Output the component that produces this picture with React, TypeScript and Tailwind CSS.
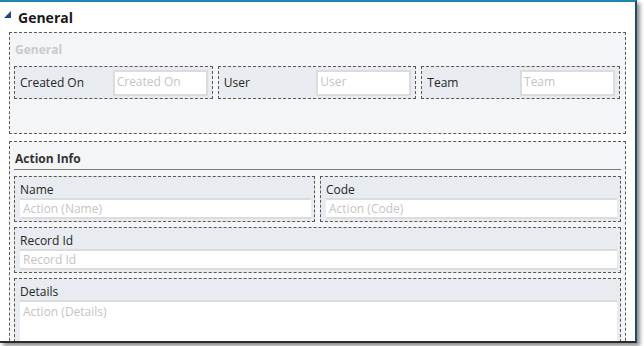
import React from 'react'

const font = { fontFamily: '"Segoe UI", "Open Sans", "Noto Sans", sans-serif' }

function InlineField({ label, placeholder }: { label: string; placeholder: string }) {
  return (
    <div className="flex-1 h-[33px] flex items-center border border-dashed border-[#595959] bg-[#e8ebef]">
      <span className="pl-[5px] text-[12px] text-[#262626] flex-1">{label}</span>
      <div className="w-[95px] h-[26px] mr-[4px] bg-white border-2 border-[#dcdcdc] flex items-center pl-[2px] pb-[2px] text-[12px] text-[#c4c4c4]">
        {placeholder}
      </div>
    </div>
  )
}

function StackedField({
  label,
  placeholder,
  className = '',
  tall = false,
}: {
  label: string
  placeholder: string
  className?: string
  tall?: boolean
}) {
  return (
    <div className={`border border-dashed border-[#595959] bg-[#e8ebef] pt-[5px] pl-[5px] pr-[3px] pb-[2px] ${className}`}>
      <div className="h-[16px] leading-[16px] text-[12px] text-[#262626]">{label}</div>
      <div
        className={`bg-white border-t-2 border-b-2 border-[#dcdcdc] pl-[3px] text-[12px] text-[#c4c4c4] flex ${
          tall ? 'h-[80px] items-start pt-[1px]' : 'h-[21px] items-center'
        }`}
      >
        {placeholder}
      </div>
    </div>
  )
}

export default function App() {
  return (
    <div className="w-[644px] h-[346px] bg-white" style={font}>
      <div className="w-[637px] h-[343px] border-t-2 border-t-[#1f86b3] border-r-2 border-r-[#1c4d69] border-b-2 border-b-[#2b2b2b] bg-white overflow-hidden shadow-[3px_3px_4px_rgba(0,0,0,0.45)]">
        {/* Header */}
        <div className="h-[30px] flex items-center pl-[4px] gap-[7px]">
          <svg width="7" height="7" viewBox="0 0 7 7" className="-mt-[6px]">
            <polygon points="7,0 7,7 0,7" fill="#1d4a86" />
          </svg>
          <span className="text-[14px] font-bold text-[#1a1a1a]">General</span>
        </div>

        {/* General section */}
        <div className="mx-[9px] h-[102px] border border-dashed border-[#595959] bg-[#f4f5f7]">
          <div className="h-[33px] flex items-center pl-[5px] text-[12px] font-bold text-[#c9cacd]">General</div>
          <div className="flex gap-[5px] pl-[4px] pr-[5px]">
            <InlineField label="Created On" placeholder="Created On" />
            <InlineField label="User" placeholder="User" />
            <InlineField label="Team" placeholder="Team" />
          </div>
        </div>

        {/* Action Info section */}
        <div className="mx-[9px] mt-[7px] h-[220px] border border-dashed border-[#595959] bg-[#f4f5f7]">
          <div className="h-[27px] flex items-end pl-[5px] pb-[1px] text-[12px] font-bold text-[#333333]">Action Info</div>
          <div className="mx-[4px] h-[1px] bg-[#7d7d75]" />
          <div className="pl-[4px] pr-[4px] pt-[6px] flex flex-col gap-[5px]">
            <div className="flex gap-[5px]">
              <StackedField label="Name" placeholder="Action (Name)" className="flex-1" />
              <StackedField label="Code" placeholder="Action (Code)" className="flex-1" />
            </div>
            <StackedField label="Record Id" placeholder="Record Id" />
            <StackedField label="Details" placeholder="Action (Details)" tall />
          </div>
        </div>
      </div>
    </div>
  )
}
